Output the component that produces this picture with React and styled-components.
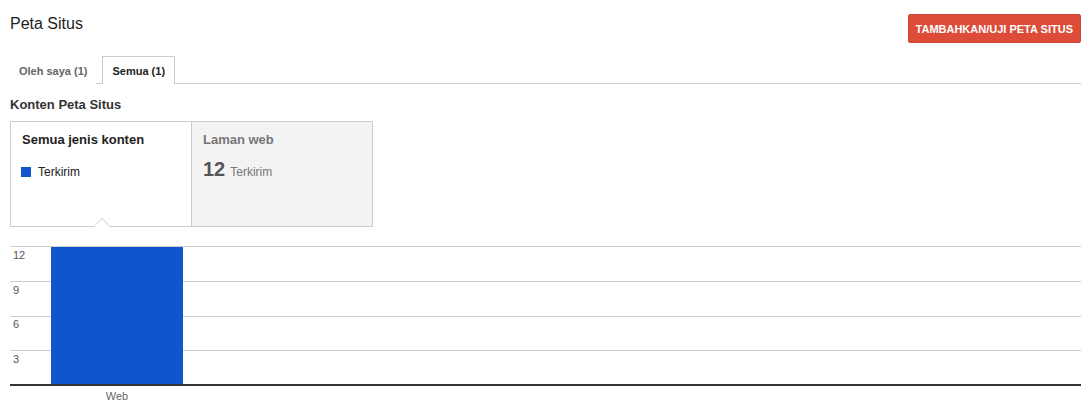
import React from 'react';
import styled, { createGlobalStyle } from 'styled-components';

const GlobalStyle = createGlobalStyle`
  html, body {
    margin: 0;
    padding: 0;
    background: #fff;
    font-family: Arial, "Liberation Sans", sans-serif;
    color: #222;
  }
`;

const Page = styled.div`
  padding: 0 8px 0 10px;
`;

const Header = styled.div`
  display: flex;
  justify-content: space-between;
  align-items: flex-start;
  height: 56px;
`;

const Title = styled.h1`
  margin: 14px 0 0;
  font-size: 16px;
  font-weight: normal;
  color: #222;
  line-height: 20px;
`;

const RedButton = styled.button`
  margin-top: 14px;
  height: 29px;
  padding: 0 7px;
  background: #dd4b39;
  border: 1px solid #d14836;
  border-radius: 2px;
  color: #fff;
  font-family: Arial, "Liberation Sans", sans-serif;
  font-size: 11px;
  font-weight: bold;
  text-transform: uppercase;
  cursor: pointer;
`;

const TabBar = styled.div`
  display: flex;
  border-bottom: 1px solid #ccc;
  height: 27px;
`;

const Tab = styled.div`
  box-sizing: border-box;
  height: 28px;
  padding: 0 ${p => (p.$active ? 9 : 8)}px;
  margin-right: 6px;
  display: flex;
  align-items: center;
  font-size: 11px;
  font-weight: bold;
  color: ${p => (p.$active ? '#222' : '#666')};
  background: #fff;
  border: 1px solid ${p => (p.$active ? '#ccc' : 'transparent')};
  border-bottom: none;
  cursor: pointer;
`;

const SectionTitle = styled.h2`
  margin: 13px 0 8px;
  font-size: 13px;
  font-weight: bold;
  color: #333;
  line-height: 16px;
`;

const Card = styled.div`
  display: grid;
  grid-template-columns: 180px 181px;
  width: 363px;
  height: 106px;
  box-sizing: border-box;
  border: 1px solid #ccc;
`;

const Cell = styled.div`
  position: relative;
  padding: 10px 11px;
  background: ${p => (p.$muted ? '#f3f3f3' : '#fff')};
  border-left: ${p => (p.$muted ? '1px solid #ccc' : 'none')};

  ${p =>
    p.$selected &&
    `
    &::before, &::after {
      content: '';
      position: absolute;
      left: 50%;
      width: 0;
      height: 0;
      border-style: solid;
      border-color: transparent;
    }
    &::before {
      bottom: -1px;
      margin-left: -8px;
      border-width: 0 9px 9px 9px;
      border-bottom-color: #ccc;
    }
    &::after {
      bottom: -1px;
      margin-left: -7px;
      border-width: 0 8px 8px 8px;
      border-bottom-color: #fff;
    }
  `}
`;

const CellTitle = styled.div`
  font-size: 13px;
  font-weight: bold;
  color: ${p => (p.$muted ? '#777' : '#222')};
  line-height: 16px;
`;

const Legend = styled.div`
  display: flex;
  align-items: center;
  gap: 7px;
  margin-top: 17px;
  font-size: 12px;
  color: #222;
`;

const Swatch = styled.span`
  width: 10px;
  height: 10px;
  margin-left: -1px;
  background: #1155cc;
`;

const Stat = styled.div`
  display: flex;
  align-items: baseline;
  gap: 5px;
  margin-top: 10px;
  font-size: 12px;
  color: #777;
`;

const Big = styled.span`
  font-size: 20px;
  font-weight: bold;
  color: #555;
`;

const ChartWrap = styled.div`
  margin-top: 9px;
`;

const gridY = [10, 45, 80, 114];
const labels = [
  { t: '12', y: 23 },
  { t: '9', y: 58 },
  { t: '6', y: 92 },
  { t: '3', y: 127 },
];

const BarChart = () => (
  <svg width="1071" height="167" viewBox="0 0 1071 167">
    {gridY.map(y => (
      <line key={y} x1="0" x2="1071" y1={y + 0.5} y2={y + 0.5} stroke="#ccc" strokeWidth="1" />
    ))}
    <rect x="41" y="11" width="132" height="138" fill="#1155cc" />
    <line x1="0" x2="1071" y1="149" y2="149" stroke="#333" strokeWidth="2" />
    {labels.map(l => (
      <text key={l.t} x="3" y={l.y} fontSize="11" fill="#555" fontFamily="Arial, 'Liberation Sans', sans-serif">
        {l.t}
      </text>
    ))}
    <text x="107" y="164" fontSize="11" fill="#666" textAnchor="middle" fontFamily="Arial, 'Liberation Sans', sans-serif">
      Web
    </text>
  </svg>
);

export default function App() {
  return (
    <>
      <GlobalStyle />
      <Page>
        <Header>
          <Title>Peta Situs</Title>
          <RedButton>Tambahkan/Uji Peta Situs</RedButton>
        </Header>

        <TabBar>
          <Tab>Oleh saya (1)</Tab>
          <Tab $active>Semua (1)</Tab>
        </TabBar>

        <SectionTitle>Konten Peta Situs</SectionTitle>

        <Card>
          <Cell $selected>
            <CellTitle>Semua jenis konten</CellTitle>
            <Legend>
              <Swatch />
              Terkirim
            </Legend>
          </Cell>
          <Cell $muted>
            <CellTitle $muted>Laman web</CellTitle>
            <Stat>
              <Big>12</Big>
              Terkirim
            </Stat>
          </Cell>
        </Card>

        <ChartWrap>
          <BarChart />
        </ChartWrap>
      </Page>
    </>
  );
}
